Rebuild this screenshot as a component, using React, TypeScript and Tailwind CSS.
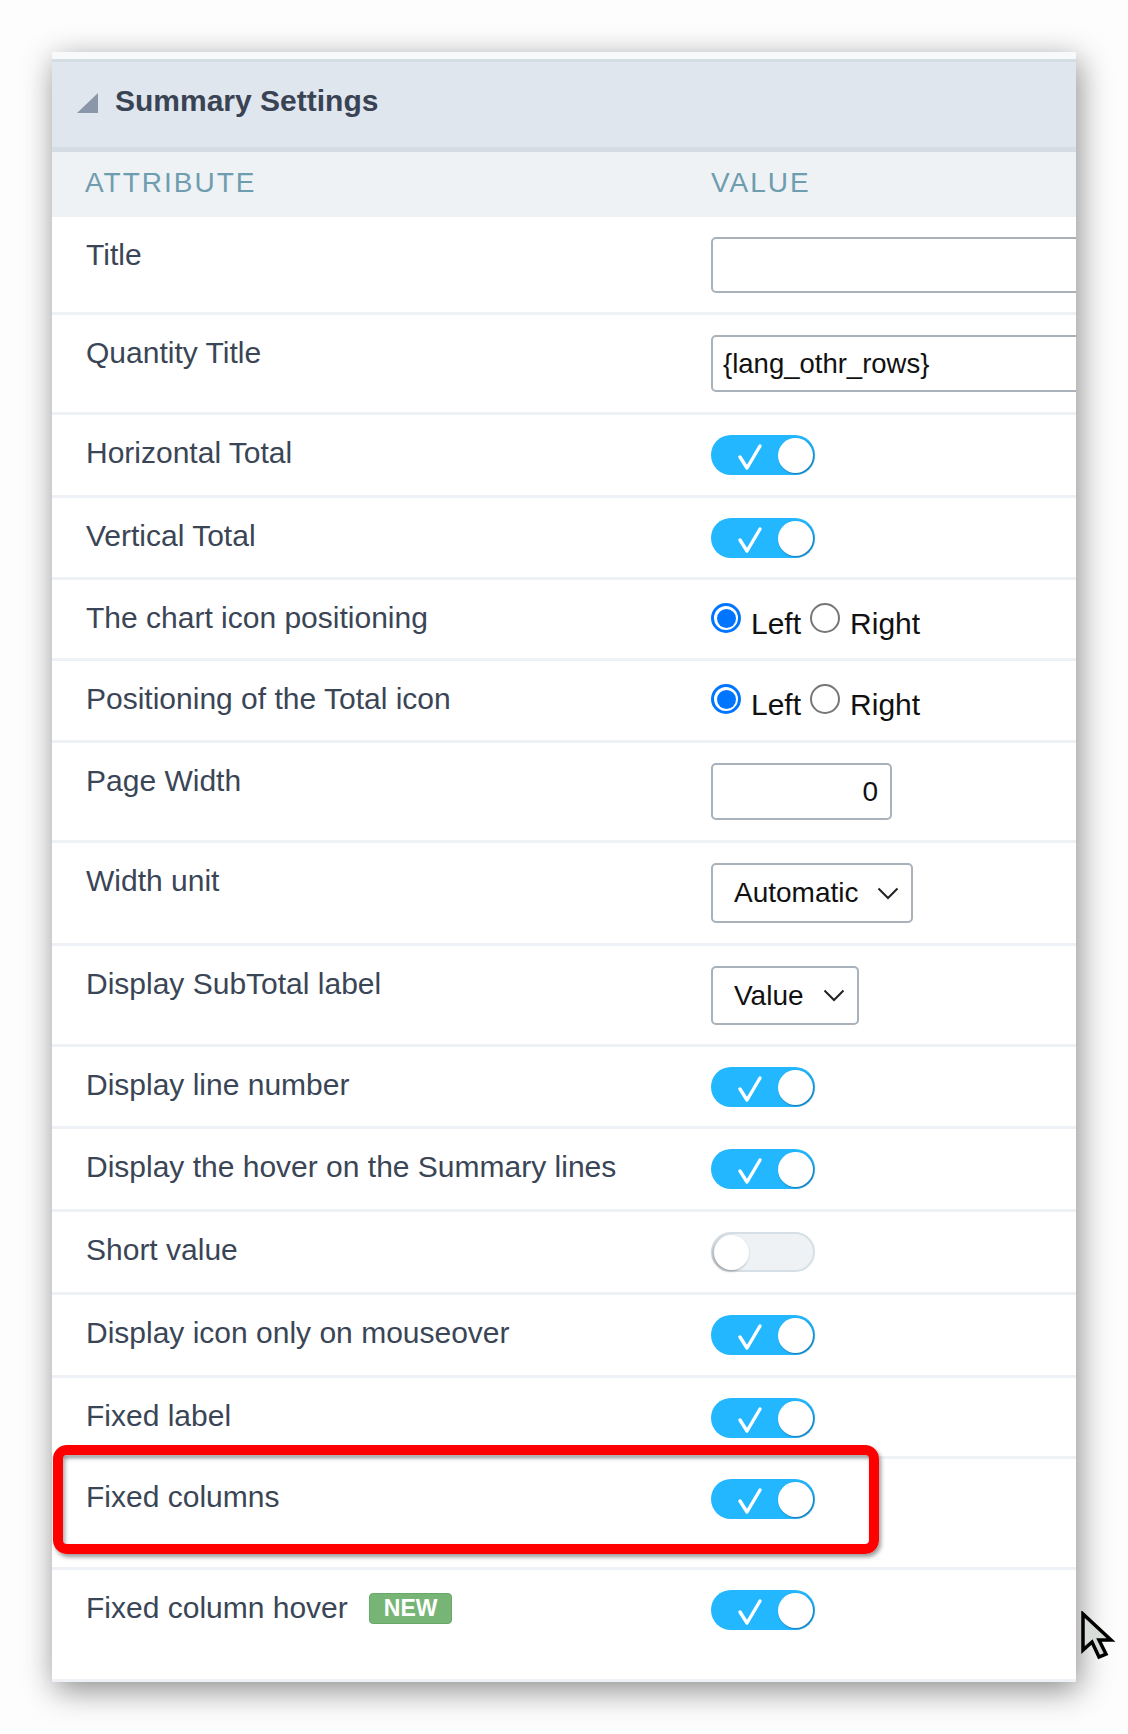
import React from "react"

type Row = {
  label: string
  kind: "text" | "number" | "select" | "toggle" | "radio"
  value?: string
  on?: boolean
  isNew?: boolean
  pb?: string
  w?: string
  h?: string
}

const rows: Row[] = [
  { label: "Title", kind: "text", value: "", w: "w-[420px]", h: "h-[56px]", pb: "pb-[19px]" },
  { label: "Quantity Title", kind: "text", value: "{lang_othr_rows}", w: "w-[420px]", h: "h-[57px]" },
  { label: "Horizontal Total", kind: "toggle", on: true },
  { label: "Vertical Total", kind: "toggle", on: true, pb: "pb-[19px]" },
  { label: "The chart icon positioning", kind: "radio", pb: "pb-[19px]" },
  { label: "Positioning of the Total icon", kind: "radio" },
  { label: "Page Width", kind: "number", value: "0", w: "w-[181px]", h: "h-[57px]" },
  { label: "Width unit", kind: "select", value: "Automatic", w: "w-[202px]", h: "h-[60px]" },
  { label: "Display SubTotal label", kind: "select", value: "Value", w: "w-[148px]", h: "h-[59px]", pb: "pb-[19px]" },
  { label: "Display line number", kind: "toggle", on: true, pb: "pb-[19px]" },
  { label: "Display the hover on the Summary lines", kind: "toggle", on: true },
  { label: "Short value", kind: "toggle", on: false },
  { label: "Display icon only on mouseover", kind: "toggle", on: true },
  { label: "Fixed label", kind: "toggle", on: true, pb: "pb-[18px]" },
  { label: "Fixed columns", kind: "toggle", on: true, pb: "pb-[48px]" },
  { label: "Fixed column hover", kind: "toggle", on: true, isNew: true, pb: "pb-[49px]" },
]

function Toggle({ on }: { on?: boolean }) {
  if (!on) {
    return (
      <div className="flex items-center w-[104px] h-[40px] rounded-full bg-[#eef2f5] border-2 border-[#d6dfe5] pl-[1px]">
        <div className="w-[35px] h-[35px] rounded-full bg-white shadow-[-1px_1px_3px_rgba(0,0,0,0.35)]" />
      </div>
    )
  }
  return (
    <div className="flex items-center justify-between w-[104px] h-[40px] rounded-full bg-[#22b7ff] pl-[26px] pr-[2px]">
      <svg width="26" height="28" viewBox="0 0 26 28" className="mt-[4px]">
        <path d="M3 14 L10 25 L23 3" fill="none" stroke="white" strokeWidth="3.4" strokeLinecap="round" strokeLinejoin="round" />
      </svg>
      <div className="w-[35px] h-[35px] rounded-full bg-white shadow-[1px_1px_2px_rgba(0,60,110,0.55)]" />
    </div>
  )
}

function Radio({ checked }: { checked?: boolean }) {
  return checked ? (
    <span className="flex items-center justify-center shrink-0 w-[30px] h-[30px] rounded-full border-[3px] border-[#0075ff] bg-white">
      <span className="block w-[19px] h-[19px] rounded-full bg-[#0075ff]" />
    </span>
  ) : (
    <span className="block shrink-0 w-[30px] h-[30px] rounded-full border-2 border-[#767676] bg-white" />
  )
}

function Chevron() {
  return (
    <svg width="22" height="13" viewBox="0 0 22 13">
      <polyline points="1.5,1.5 11,11 20.5,1.5" fill="none" stroke="#222" strokeWidth="2" />
    </svg>
  )
}

function ValueCell({ row }: { row: Row }) {
  if (row.kind === "toggle") return <Toggle on={row.on} />
  if (row.kind === "radio") {
    return (
      <div className="flex items-start h-[39px] text-[30px] leading-[36px] text-[#111]">
        <span className="mt-[3px]"><Radio checked /></span>
        <span className="ml-[10px] mt-[6px]">Left</span>
        <span className="ml-[9px] mt-[3px]"><Radio /></span>
        <span className="ml-[10px] mt-[6px]">Right</span>
      </div>
    )
  }
  if (row.kind === "select") {
    return (
      <div className={`flex items-center justify-between ${row.w} ${row.h} border-2 border-[#a9b1ba] rounded-[5px] pl-[21px] pr-[12px] text-[28px] text-[#111] bg-white`}>
        <span>{row.value}</span>
        <Chevron />
      </div>
    )
  }
  if (row.kind === "number") {
    return (
      <div className={`flex items-center justify-end ${row.w} ${row.h} border-2 border-[#a9b1ba] rounded-[5px] pr-[12px] text-[28px] text-[#111] bg-white`}>
        {row.value}
      </div>
    )
  }
  return (
    <div className={`flex items-center shrink-0 ${row.w} ${row.h} border-2 border-[#a9b1ba] rounded-[5px] pl-[10px] text-[27.5px] text-[#111] bg-white`}>
      {row.value}
    </div>
  )
}

export default function App() {
  return (
    <div className="relative w-[1128px] h-[1734px] bg-[#fdfdfd] pt-[52px] pl-[52px]" style={{ fontFamily: '"Liberation Sans", Arial, sans-serif' }}>
      <div className="w-[1024px] bg-white overflow-hidden shadow-[3px_8px_30px_rgba(0,0,0,0.45)]">
        {/* header */}
        <div className="h-[7px] bg-[#f7f9fb]" />
        <div className="flex items-center h-[93px] bg-[#dfe6ee] border-t-[3px] border-b-[5px] border-[#d3dde3] pl-[25px] pb-[8px]">
          <svg width="21" height="20" viewBox="0 0 21 20" className="mt-[5px]">
            <polygon points="0,20 21,20 21,0" fill="#8a97a8" />
          </svg>
          <span className="ml-[17px] text-[30px] font-bold text-[#3a4354]">Summary Settings</span>
        </div>
        <div className="flex items-center h-[65px] pb-[4px] bg-[#eef2f5] text-[28px] tracking-[2px] text-[#6f9db0]">
          <div className="w-[659px] pl-[33px]">ATTRIBUTE</div>
          <div>VALUE</div>
        </div>

        {rows.map((row) => (
          <div
            key={row.label}
            className={`flex items-start pt-[20px] border-b-[3px] border-[#eef2f6] ${row.pb ?? "pb-[20px]"}`}
          >
            <div className="flex items-center w-[659px] shrink-0 pl-[34px] text-[30px] leading-[36px] text-[#3a4556]">
              <span>{row.label}</span>
              {row.isNew && (
                <span className="ml-[21px] px-[14px] h-[31px] flex items-center rounded-[4px] bg-[#77b577] border border-[#68a868] text-white text-[23px] font-bold leading-none">
                  NEW
                </span>
              )}
            </div>
            <div className="flex-1 flex">
              <ValueCell row={row} />
            </div>
          </div>
        ))}
      </div>

      {/* red highlight annotation */}
      <div className="absolute left-[53px] top-[1445px] w-[826px] h-[109px] border-[10px] border-[#ff0000] rounded-[14px] shadow-[2px_3px_4px_rgba(0,0,0,0.4),inset_2px_3px_4px_rgba(0,0,0,0.35)]" />

      {/* mouse cursor */}
      <svg className="absolute left-[1080px] top-[1611px]" width="38" height="52" viewBox="0 0 38 52">
        <path d="M3 3 L3 39 L12 31 L19 46 L26 43 L19 29 L31 29 Z" fill="#d8dcd8" stroke="#000" strokeWidth="3.5" strokeLinejoin="miter" />
      </svg>
    </div>
  )
}
